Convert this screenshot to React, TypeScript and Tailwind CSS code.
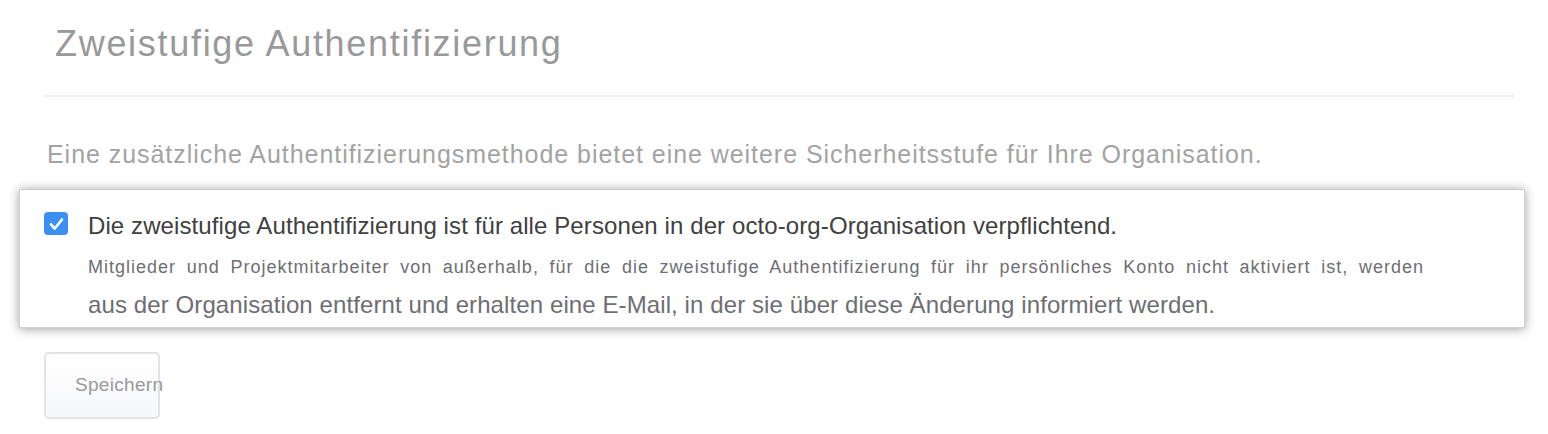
import React from "react";

export default function App() {
  return (
    <div className="w-[1548px] h-[434px] bg-white overflow-hidden" style={{ fontFamily: '"Liberation Sans", Arial, sans-serif' }}>
      <div className="pl-[44px] pr-[34px]">
        <h1 className="pt-[23px] pl-[11px] text-[36px] leading-[42px] tracking-[1.7px] text-[#999999] font-normal">Zweistufige Authentifizierung</h1>
        <div className="mt-[30px] h-[2px] bg-[#f0f0f0]" />
        <p className="mt-[42px] pl-[3px] text-[25px] leading-[30px] tracking-[0.95px] text-[#a3a3a3]">
          Eine zusätzliche Authentifizierungsmethode bietet eine weitere Sicherheitsstufe für Ihre Organisation.
        </p>
      </div>
      <div className="ml-[19px] mt-[20px] w-[1506px] h-[139px] bg-white border border-[#cfcfcf] shadow-[0_1px_10px_rgba(0,0,0,0.38)] pl-[24px] pt-[22px] flex gap-[20px]">
        <div className="w-[24px] h-[23px] rounded-[4px] bg-[#3b8ef2] flex items-center justify-center shrink-0">
          <svg width="15" height="14" viewBox="0 0 15 14" fill="none">
            <path d="M2 7.5 L5.8 11.5 L13 2.5" stroke="white" strokeWidth="2.6" strokeLinecap="round" strokeLinejoin="round" />
          </svg>
        </div>
        <div className="flex flex-col">
          <div className="text-[24px] leading-[28px] tracking-[0.1px] text-[#404040]">
            Die zweistufige Authentifizierung ist für alle Personen in der octo-org-Organisation verpflichtend.
          </div>
          <div className="mt-[16px] w-[1336px] text-[18px] leading-[22px] tracking-[1px] text-[#6e6e72] text-justify [text-align-last:justify]">
            Mitglieder und Projektmitarbeiter von außerhalb, für die die zweistufige Authentifizierung für ihr persönliches Konto nicht aktiviert ist, werden
          </div>
          <div className="mt-[13px] text-[24px] leading-[28px] tracking-[0.1px] text-[#6e6e72]">
            aus der Organisation entfernt und erhalten eine E-Mail, in der sie über diese Änderung informiert werden.
          </div>
        </div>
      </div>
      <div className="ml-[44px] mt-[24px] w-[116px] h-[67px] rounded-[5px] border-2 border-[#e3e3e3] bg-gradient-to-b from-white to-[#f6f7f9] flex items-center pl-[29px] overflow-visible">
        <span className="text-[19px] tracking-[0.3px] text-[#999999] whitespace-nowrap">Speichern</span>
      </div>
    </div>
  );
}
